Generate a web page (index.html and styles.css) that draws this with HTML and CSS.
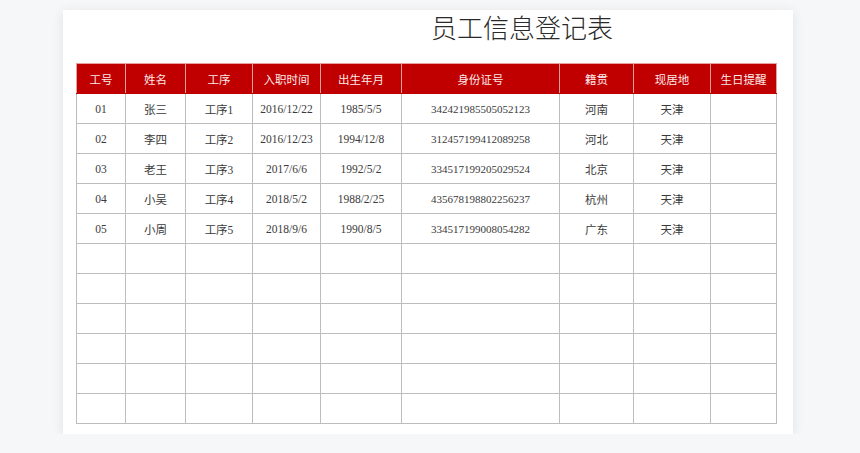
FILE: index.html
```html
<!DOCTYPE html>
<html lang="zh">
<head>
<meta charset="utf-8">
<title>员工信息登记表</title>
<link rel="stylesheet" href="styles.css">
</head>
<body>
<div class="paper">
  <h1 class="title">员工信息登记表</h1>
  <table class="sheet">
    <colgroup>
      <col class="c1"><col class="c2"><col class="c3"><col class="c4"><col class="c5"><col class="c6"><col class="c7"><col class="c8"><col class="c9">
    </colgroup>
    <thead>
      <tr><th>工号</th><th>姓名</th><th>工序</th><th>入职时间</th><th>出生年月</th><th>身份证号</th><th>籍贯</th><th>现居地</th><th>生日提醒</th></tr>
    </thead>
    <tbody>
      <tr><td>01</td><td>张三</td><td>工序1</td><td>2016/12/22</td><td>1985/5/5</td><td class="id">342421985505052123</td><td>河南</td><td>天津</td><td></td></tr>
      <tr><td>02</td><td>李四</td><td>工序2</td><td>2016/12/23</td><td>1994/12/8</td><td class="id">312457199412089258</td><td>河北</td><td>天津</td><td></td></tr>
      <tr><td>03</td><td>老王</td><td>工序3</td><td>2017/6/6</td><td>1992/5/2</td><td class="id">334517199205029524</td><td>北京</td><td>天津</td><td></td></tr>
      <tr><td>04</td><td>小吴</td><td>工序4</td><td>2018/5/2</td><td>1988/2/25</td><td class="id">435678198802256237</td><td>杭州</td><td>天津</td><td></td></tr>
      <tr><td>05</td><td>小周</td><td>工序5</td><td>2018/9/6</td><td>1990/8/5</td><td class="id">334517199008054282</td><td>广东</td><td>天津</td><td></td></tr>
      <tr><td></td><td></td><td></td><td></td><td></td><td></td><td></td><td></td><td></td></tr>
      <tr><td></td><td></td><td></td><td></td><td></td><td></td><td></td><td></td><td></td></tr>
      <tr><td></td><td></td><td></td><td></td><td></td><td></td><td></td><td></td><td></td></tr>
      <tr><td></td><td></td><td></td><td></td><td></td><td></td><td></td><td></td><td></td></tr>
      <tr><td></td><td></td><td></td><td></td><td></td><td></td><td></td><td></td><td></td></tr>
      <tr><td></td><td></td><td></td><td></td><td></td><td></td><td></td><td></td><td></td></tr>
    </tbody>
  </table>
</div>
</body>
</html>
```
FILE: styles.css
```css
html, body {
  margin: 0;
  padding: 0;
}
body {
  background: #f6f7f8;
  font-family: "Liberation Serif", "Noto Sans CJK SC", serif;
  color: #3a3a3a;
}
.paper {
  box-sizing: border-box;
  width: 730px;
  height: 424px;
  margin: 10px 0 0 63px;
  padding: 0 17px 0 13px;
  background: #fff;
  box-shadow: 0 2px 12px rgba(0, 0, 0, 0.09);
}
.title {
  margin: 0 0 19px 0;
  padding-left: 355px;
  font-family: "Noto Sans CJK SC", sans-serif;
  font-weight: 300;
  font-size: 26px;
  line-height: 34px;
  color: #2a2a2a;
}
.sheet {
  width: 700px;
  table-layout: fixed;
  border-collapse: collapse;
  font-size: 11.5px;
}
.c1 { width: 49px; }
.c2 { width: 60px; }
.c3 { width: 67px; }
.c4 { width: 68px; }
.c5 { width: 81px; }
.c6 { width: 158px; }
.c7 { width: 74px; }
.c8 { width: 77px; }
.c9 { width: 66px; }
.sheet tr {
  height: 30px;
}
.sheet th {
  padding: 0;
  background: #c00000;
  color: #fbe9e9;
  font-weight: 400;
  font-size: 11.5px;
  border: 1px solid #e7a0a0;
  border-bottom-color: #c00000;
  text-align: center;
}
.sheet td {
  padding: 0;
  border: 1px solid #bdbdbd;
  text-align: center;
  white-space: nowrap;
}
.sheet td.id {
  font-size: 11px;
}
```
